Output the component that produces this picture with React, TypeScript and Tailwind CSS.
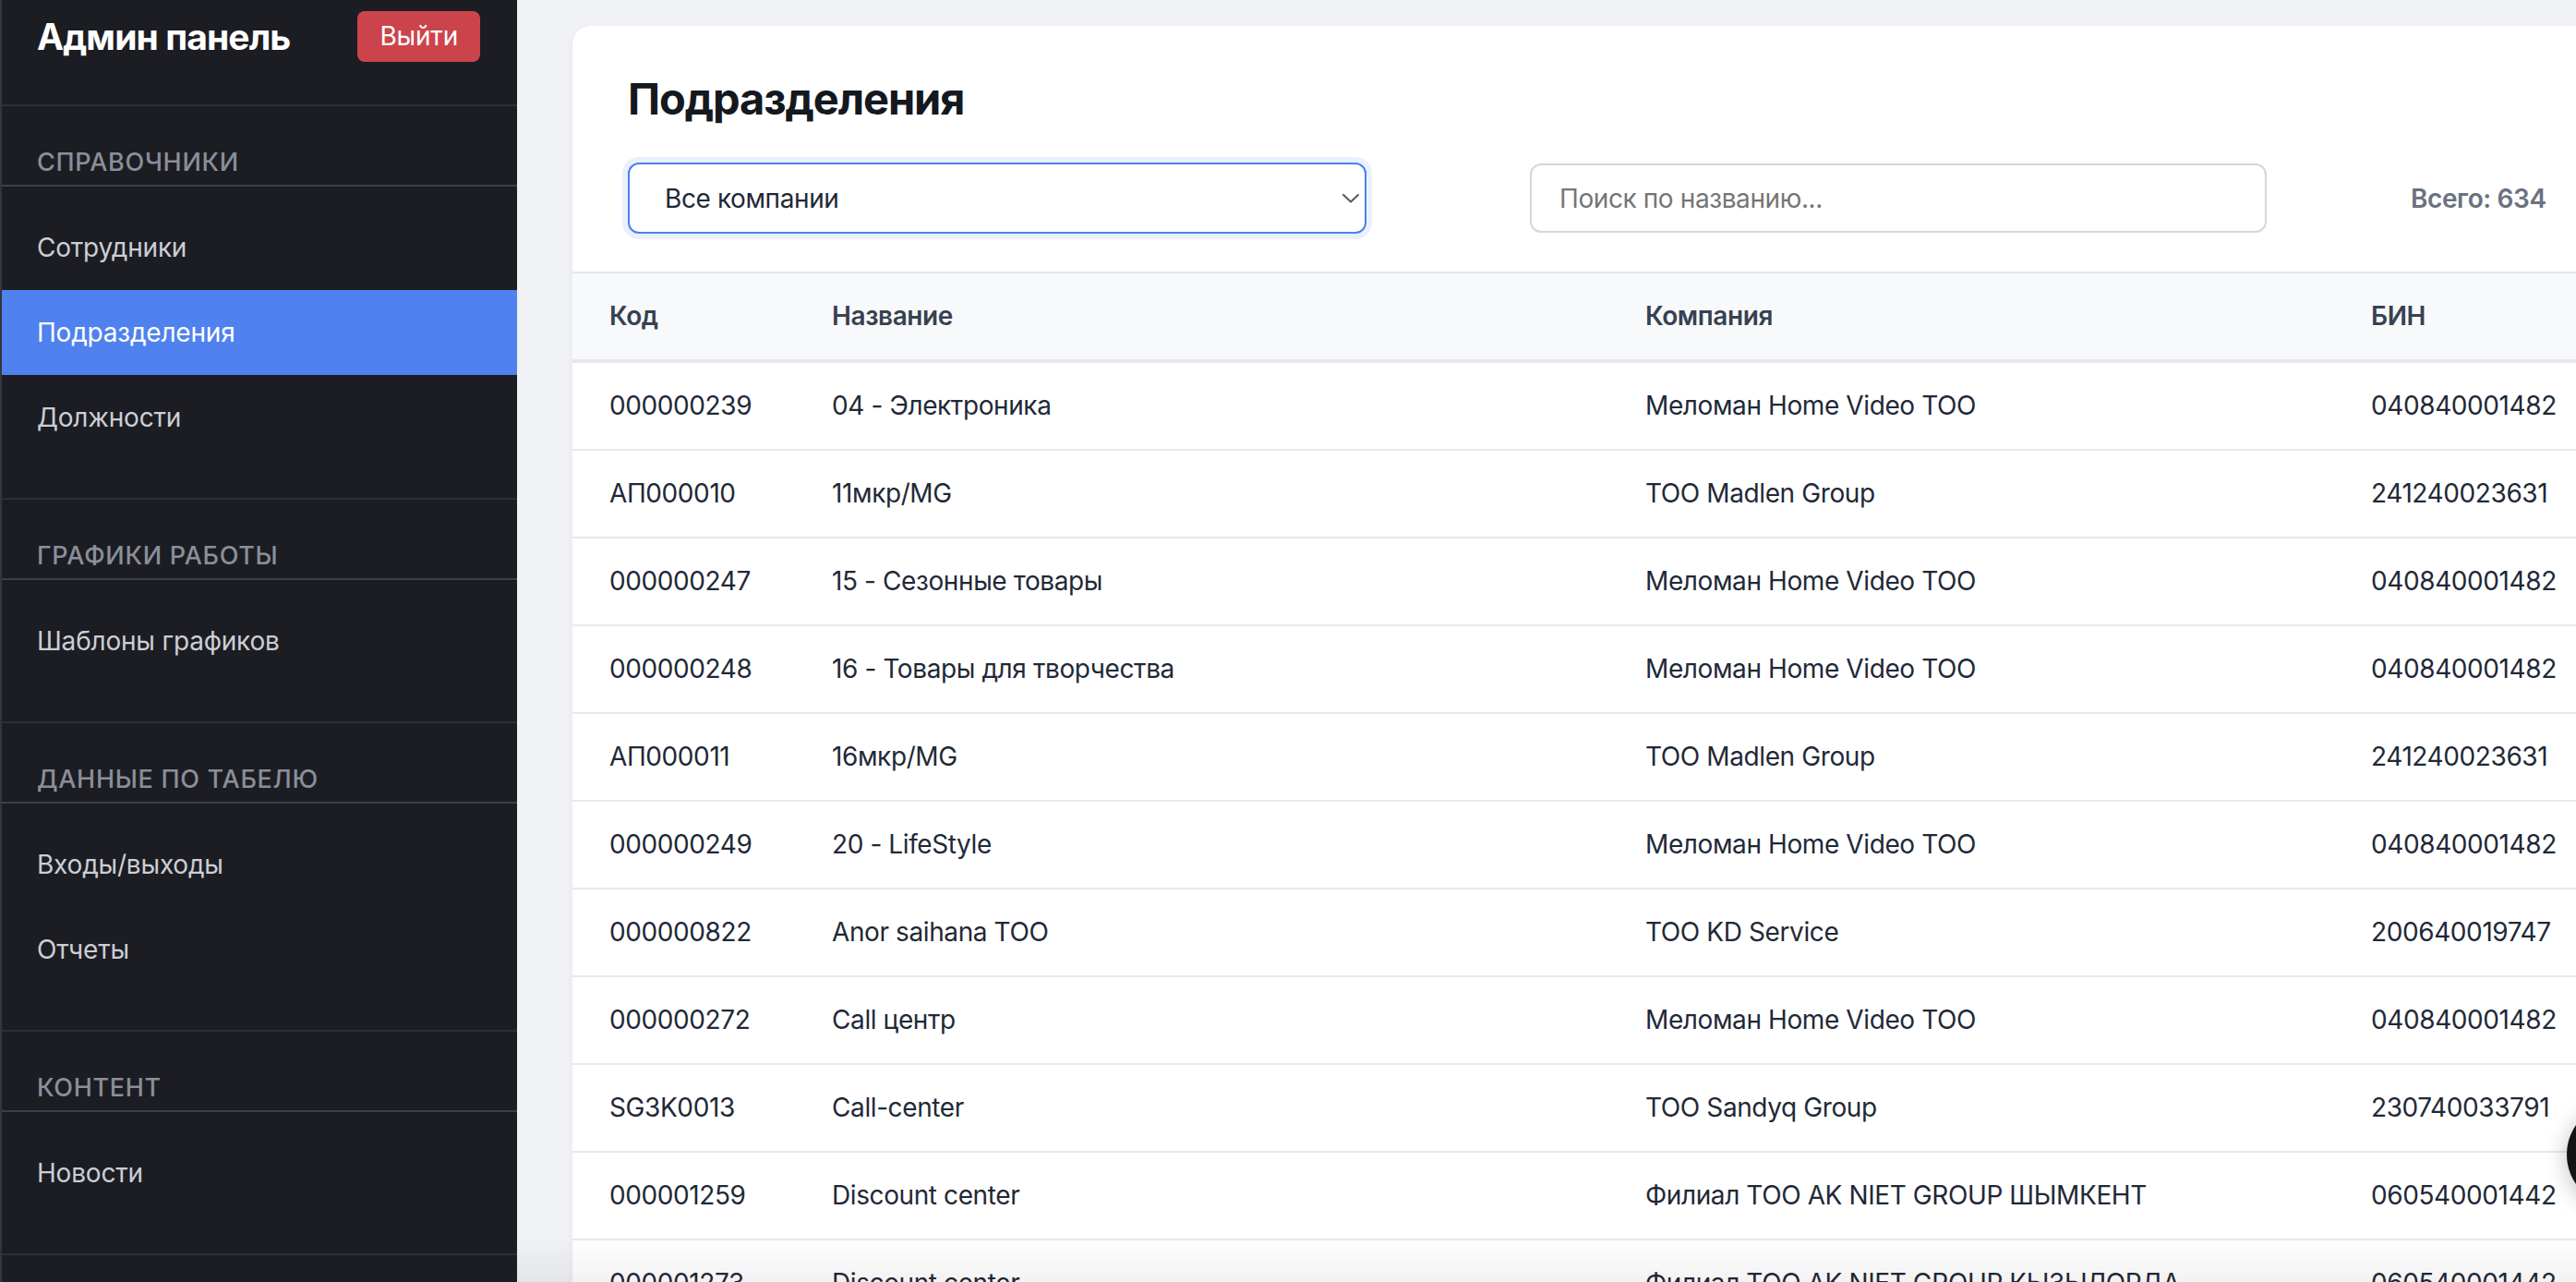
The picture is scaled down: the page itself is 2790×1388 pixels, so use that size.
import React from "react";

type Row = { code: string; name: string; company: string; bin: string };

const rows: Row[] = [
  { code: "000000239", name: "04 - Электроника", company: "Меломан Home Video ТОО", bin: "040840001482" },
  { code: "АП000010", name: "11мкр/MG", company: "ТОО Madlen Group", bin: "241240023631" },
  { code: "000000247", name: "15 - Сезонные товары", company: "Меломан Home Video ТОО", bin: "040840001482" },
  { code: "000000248", name: "16 - Товары для творчества", company: "Меломан Home Video ТОО", bin: "040840001482" },
  { code: "АП000011", name: "16мкр/MG", company: "ТОО Madlen Group", bin: "241240023631" },
  { code: "000000249", name: "20 - LifeStyle", company: "Меломан Home Video ТОО", bin: "040840001482" },
  { code: "000000822", name: "Anor saihana ТОО", company: "ТОО KD Service", bin: "200640019747" },
  { code: "000000272", name: "Call центр", company: "Меломан Home Video ТОО", bin: "040840001482" },
  { code: "SG3K0013", name: "Call-center", company: "ТОО Sandyq Group", bin: "230740033791" },
  { code: "000001259", name: "Discount center", company: "Филиал ТОО AK NIET GROUP ШЫМКЕНТ", bin: "060540001442" },
  { code: "000001273", name: "Discount center", company: "Филиал ТОО AK NIET GROUP КЫЗЫЛОРДА", bin: "060540001442" },
];

type Group = { title: string; items: { label: string; active?: boolean }[] };

const groups: Group[] = [
  {
    title: "Справочники",
    items: [{ label: "Сотрудники" }, { label: "Подразделения", active: true }, { label: "Должности" }],
  },
  { title: "Графики работы", items: [{ label: "Шаблоны графиков" }] },
  { title: "Данные по табелю", items: [{ label: "Входы/выходы" }, { label: "Отчеты" }] },
  { title: "Контент", items: [{ label: "Новости" }] },
];

function Sidebar() {
  return (
    <aside className="w-[560px] shrink-0 h-full bg-[#1c1d22] border-l-2 border-[#34363c]">
      <div className="flex items-center justify-between pl-[38px] pr-[40px] pt-[12px] pb-[46px] border-b-2 border-[#2d2f35]">
        <div className="text-[39px] leading-[48px] font-bold tracking-[-0.9px] text-white whitespace-nowrap">
          Админ панель
        </div>
        <button className="h-[55px] px-[24px] rounded-[8px] bg-[#cc444b] text-white text-[28px] leading-[55px] tracking-[-0.2px]">
          Выйти
        </button>
      </div>
      {groups.map((g, gi) => (
        <div key={g.title} className={gi === 0 ? "" : "border-t-2 border-[#2d2f35]"}>
          <div className="pt-[43px] pb-[6px] pl-[38px] pr-[40px] text-[27px] leading-[36px] font-medium uppercase tracking-[0.7px] text-[#8a8f9b] border-b-2 border-[#3a414b] whitespace-nowrap">
            {g.title}
          </div>
          <div className="pt-[20px] pb-[41px]">
            {g.items.map((it) => (
              <div
                key={it.label}
                className={
                  it.active
                    ? "h-[92px] flex items-center pl-[38px] pr-[40px] text-[28px] tracking-[-0.2px] bg-[#4f82ee] text-white"
                    : "h-[92px] flex items-center pl-[38px] pr-[40px] text-[28px] tracking-[-0.2px] text-[#cbced6]"
                }
              >
                {it.label}
              </div>
            ))}
          </div>
        </div>
      ))}
      <div className="border-t-2 border-[#2d2f35] h-[60px]" />
    </aside>
  );
}

function Chevron() {
  return (
    <svg width="18" height="10" viewBox="0 0 18 10" fill="none">
      <path d="M1 1l8 7.5L17 1" stroke="#555a60" strokeWidth="2" strokeLinecap="round" strokeLinejoin="round" />
    </svg>
  );
}

export default function App() {
  return (
    <div className="relative w-[2790px] h-[1388px] overflow-hidden font-['Inter','Noto_Sans',sans-serif]">
      <div className="flex w-[2879px] h-full">
        <Sidebar />
        <main className="relative flex-1 bg-[#f0f1f5] pl-[60px] pt-[28px]">
          <div className="w-[2199px] bg-white rounded-[20px] shadow-[0_2px_8px_rgba(0,0,0,0.04)] overflow-hidden">
            <div className="px-[60px] pt-[50px] pb-[41px]">
              <h1 className="text-[47px] leading-[58px] font-bold tracking-[-1.1px] text-[#141820]">Подразделения</h1>
              <div className="mt-[40px] flex items-center h-[77px]">
                <div className="relative shrink-0 w-[800px] h-[77px] rounded-[12px] border-2 border-[#4f80e9] shadow-[0_0_0_6px_#eaf0fd] bg-white">
                  <select className="appearance-none w-full h-full bg-transparent pl-[38px] pr-[40px] text-[28px] tracking-[-0.4px] text-[#1f2937] outline-none rounded-[12px]">
                    <option>Все компании</option>
                  </select>
                  <div className="absolute right-[6px] top-[32px] pointer-events-none">
                    <Chevron />
                  </div>
                </div>
                <input
                  className="shrink-0 ml-[177px] w-[798px] h-[75px] rounded-[12px] border-2 border-[#d3d6db] px-[30px] text-[28px] tracking-[-0.4px] text-[#1f2937] placeholder:text-[#757575] outline-none"
                  placeholder="Поиск по названию..."
                />
                <span className="shrink-0 ml-[156px] text-[28px] font-semibold tracking-[-0.4px] text-[#6b7280] whitespace-nowrap">
                  Всего: 634
                </span>
              </div>
            </div>
            <table className="w-full table-fixed border-separate border-spacing-0 text-[28px] tracking-[-0.4px]">
              <colgroup>
                <col className="w-[241px]" />
                <col className="w-[881px]" />
                <col className="w-[786px]" />
                <col />
              </colgroup>
              <thead>
                <tr className="bg-[#f8f9fb]">
                  {["Код", "Название", "Компания", "БИН"].map((h) => (
                    <th
                      key={h}
                      className="text-left font-semibold text-[#374151] px-[40px] py-[24px] leading-[45px] border-t-2 border-b-4 border-[#e5e7eb]"
                    >
                      {h}
                    </th>
                  ))}
                </tr>
              </thead>
              <tbody>
                {rows.map((r) => (
                  <tr key={r.code + r.company}>
                    {[r.code, r.name, r.company, r.bin].map((c, i) => (
                      <td
                        key={i}
                        className="px-[40px] py-[24px] leading-[45px] text-[#1f2937] border-b-2 border-[#e7e8ec] whitespace-nowrap"
                      >
                        {c}
                      </td>
                    ))}
                  </tr>
                ))}
              </tbody>
            </table>
          </div>
          <div className="absolute left-0 right-0 bottom-0 h-[48px] bg-linear-to-b from-transparent to-black/[0.05] pointer-events-none" />
        </main>
      </div>
      <div className="absolute left-[2780px] top-[1194px] w-[112px] h-[112px] rounded-full bg-[#141414] shadow-[0_4px_24px_rgba(0,0,0,0.25)]" />
    </div>
  );
}
